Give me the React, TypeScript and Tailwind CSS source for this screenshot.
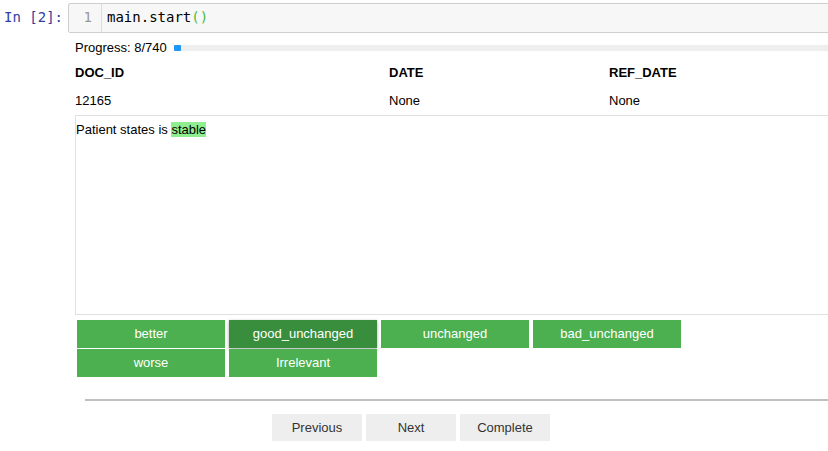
import React from "react";

const sans = { fontFamily: '"Liberation Sans", Arial, sans-serif' };
const mono = { fontFamily: '"DejaVu Sans Mono", monospace' };

export default function App() {
  const labels = ["better", "good_unchanged", "unchanged", "bad_unchanged", "worse", "Irrelevant"];
  return (
    <div className="w-[828px] h-[451px] overflow-hidden bg-white relative" style={sans}>
      <div className="flex pt-[3px]">
        <div className="w-[68px] shrink-0 pl-[4px] pt-[5px] text-[14px] leading-[19px] text-[#303f9f]" style={mono}>
          In&nbsp;[2]:
        </div>
        <div className="flex h-[30px] w-[800px] shrink-0 border border-[#cfcfcf] bg-[#f7f7f7] rounded-[2px]">
          <div className="w-[33px] shrink-0 border-r border-[#ddd] text-right pr-[9px] pt-[4px] text-[14px] leading-[19px] text-[#999]" style={mono}>
            1
          </div>
          <div className="pl-[5px] pt-[4px] text-[14px] leading-[19px] text-black" style={mono}>
            main.start<span className="text-[#44bb44]">()</span>
          </div>
        </div>
      </div>
      <div className="pl-[75px]">
        <div className="flex items-center h-[16px] mt-[7px] text-[13px] text-black">
          <span className="whitespace-nowrap shrink-0">Progress: 8/740</span>
          <div className="ml-[7px] h-[6px] w-[700px] shrink-0 bg-[#eeeeee] relative">
            <div className="h-[6px] w-[7px] bg-[#2196f3] rounded-[1px]" />
          </div>
        </div>
        <div className="flex text-[13px] font-bold text-black mt-[8px] h-[18px] items-center">
          <div className="w-[314px]">DOC_ID</div>
          <div className="w-[220px]">DATE</div>
          <div>REF_DATE</div>
        </div>
        <div className="flex text-[13px] text-black mt-[10px] h-[18px] items-center">
          <div className="w-[314px]">12165</div>
          <div className="w-[220px]">None</div>
          <div>None</div>
        </div>
        <div className="mt-[5px] h-[200px] w-[760px] border border-[#e0e0e0] pl-0 pt-[6px] text-[13px] leading-[16px] text-black">
          Patient states is <span className="bg-[#90ee90]">stable</span>
        </div>
        <div className="grid grid-cols-[148px_148px_148px_148px] gap-x-[4px] gap-y-[1px] pl-[2px] mt-[5px]">
          {labels.map((l) => (
            <div
              key={l}
              className={
                "h-[28px] flex items-center justify-center text-[13px] text-white " +
                (l === "good_unchanged" ? "bg-[#388e3c] shadow-[0_1px_3px_rgba(0,0,0,0.35)]" : "bg-[#4caf50]")
              }
            >
              {l}
            </div>
          ))}
        </div>
        <div className="ml-[10px] mt-[22px] h-[2px] bg-[#c0c0c0]" />
        <div className="flex gap-[4px] pl-[197px] mt-[13px]">
          {["Previous", "Next", "Complete"].map((b) => (
            <div key={b} className="w-[90px] h-[27px] bg-[#eeeeee] flex items-center justify-center text-[13px] text-[#333]">
              {b}
            </div>
          ))}
        </div>
      </div>
    </div>
  );
}
